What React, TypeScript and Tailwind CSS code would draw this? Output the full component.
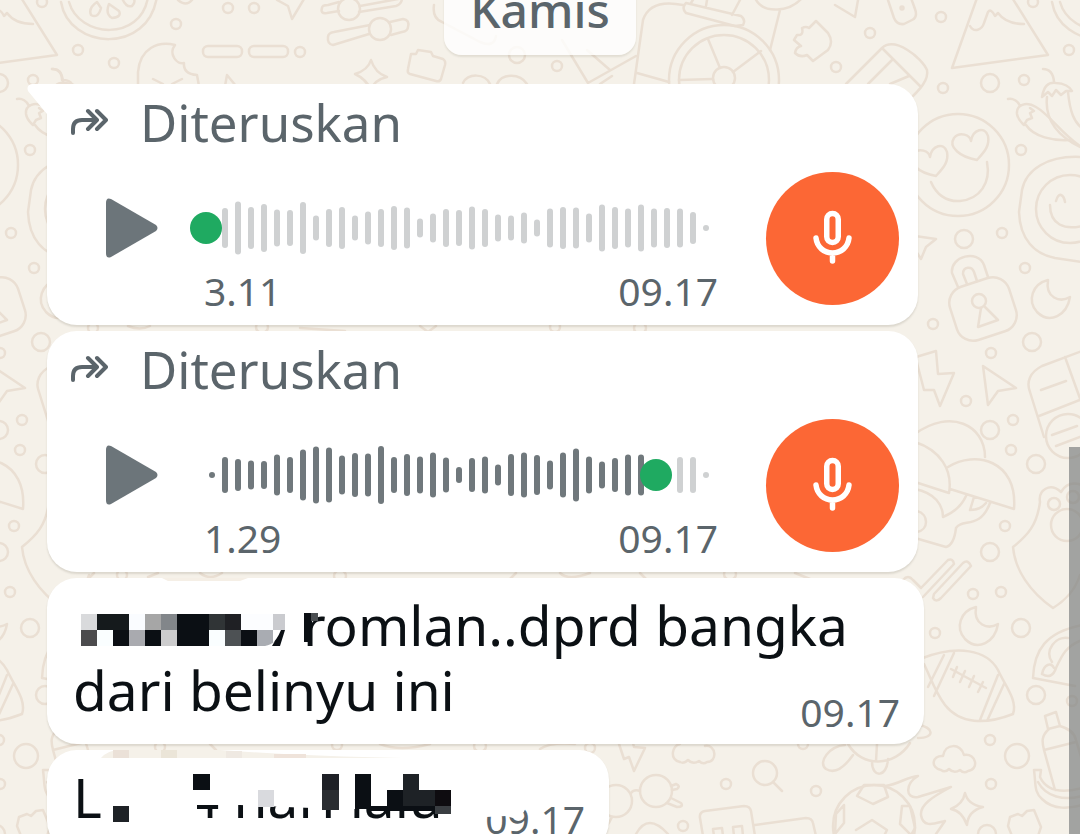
import { useState } from "react";

interface VoiceNote {
  id: string;
  length: string;
  time: string;
  played: number;
  tail?: boolean;
  bars: number[];
}

const voiceNotes: VoiceNote[] = [
  {
    id: "voice-1",
    length: "3.11",
    time: "09.17",
    played: 0,
    tail: true,
    bars: [
      6, 40, 53, 42, 48, 37, 36, 52, 25, 38, 42, 25, 33, 38, 44, 41, 19, 29, 38, 36,
      43, 38, 27, 25, 31, 17, 39, 42, 41, 29, 47, 42, 39, 47, 39, 40, 39, 32, 6,
    ],
  },
  {
    id: "voice-2",
    length: "1.29",
    time: "09.17",
    played: 90,
    bars: [
      6, 36, 32, 29, 28, 41, 36, 51, 57, 55, 39, 44, 43, 58, 36, 42, 37, 45, 35, 16,
      34, 37, 21, 42, 45, 40, 29, 45, 53, 37, 27, 34, 41, 41, 28, 16, 36, 36, 6,
    ],
  },
];

// x, y, radius
const edgeDots = [
  [1069, 50, 5], [941, 17, 5], [943, 88, 5], [1024, 80, 5], [990, 83, 9], [1033, 2, 5],
  [1021, 150, 5], [964, 239, 9], [1002, 233, 5], [1025, 268, 5], [933, 324, 5], [1032, 342, 9],
  [991, 353, 5], [966, 401, 5], [990, 430, 9], [1013, 420, 5], [1011, 450, 5], [1036, 464, 9],
  [1054, 504, 6], [1073, 497, 6], [1005, 526, 5], [990, 552, 9], [973, 594, 5], [1001, 592, 5],
  [935, 633, 5], [1021, 628, 9], [1036, 695, 9], [1072, 701, 5], [990, 740, 5], [1017, 756, 12],
  [991, 784, 5], [987, 834, 9],
];

const innerDots = [
  [114, 63, 5], [228, 8, 5], [254, 8, 5], [176, 24, 5], [300, 52, 5], [517, 55, 8], [557, 66, 5],
  [870, 33, 5], [836, 67, 5], [726, 784, 5], [816, 791, 5], [683, 826, 5], [590, 748, 5], [803, 744, 5],
  [93, 328, 5], [262, 327, 6], [555, 327, 5], [640, 328, 6], [122, 575, 5], [340, 576, 6], [730, 574, 6],
  [160, 747, 5], [337, 745, 5], [480, 746, 6],
];

// 13 cells per row, 16px each
const maskRows = [
  ["#d9dadc", "#151a1c", "#151a1c", "#fafcff", "#a6a6a6", "#82868a", "#0b0f14", "#0b0f14", "#303436", "#1f2024", "#fcfdff", "#fcfdff", "#cacbcf"],
  ["#4b4b4d", "#fafeff", "#0b0f14", "#a9aaaf", "#0b0f14", "#cccccd", "#0b0f14", "#0b0f14", "#fafeff", "#4d5154", "#0b0f14", "#a9acb2", "#ffffff"],
];

function EdgeDoodles() {
  return (
    <>
      {edgeDots.map(([x, y, r]) => (
        <circle key={`${x}-${y}`} cx={x} cy={y} r={r} />
      ))}
      {/* mountain */}
      <path d="M977 -2L952 68L1048 55L1011 -4M970 26C974 33 982 30 984 23L988 12Q991 8 995 16L998 13Q1006 24 1024 24" />
      {/* melon slice */}
      <path d="M1052 2C1060 50 1140 55 1148 -4M1060 2C1070 38 1132 42 1139 -3" />
      {/* heart eyes */}
      <circle cx="958" cy="165" r="51" />
      <path d="M977 160C960 157 948 147 954 138C960 131 970 135 971 141C973 129 985 126 988 136C990 146 984 152 977 160Z" />
      <path d="M936 176C919 173 907 163 913 154C919 147 929 151 930 157C932 145 944 142 947 152C949 162 943 168 936 176Z" />
      <path d="M931 182C936 194 946 202 960 201C980 199 991 183 987 162" />
      {/* chillies */}
      <path d="M1008 99C1013 98 1018 101 1020 106M1036 107C1026 101 1016 105 1017 114C1018 120 1021 122 1024 125L1027 120L1032 118L1030 113L1034 111L1030 108M1026 125C1034 137 1053 141 1070 140M1036 107C1050 115 1060 132 1080 146" />
      <path d="M1042 97C1044 86 1048 82 1056 83C1064 83 1070 87 1072 91L1066 91L1061 95L1056 90L1052 96L1048 92ZM1047 97C1045 115 1052 133 1080 147M1068 92C1070 112 1074 122 1082 128M1043 69Q1053 69 1054 82" />
      {/* smiling slice */}
      <circle cx="1070" cy="209" r="34" />
      <path d="M1082 157C1047 155 1026 170 1022 190L1019 212C1020 240 1035 254 1055 258L1082 262M1050 205C1050 225 1065 230 1082 226M1056 201Q1058 194 1061 195T1065 202" />
      {/* padlock */}
      <rect x="952" y="281" width="62" height="56" rx="17" transform="rotate(-18 983 309)" />
      <circle cx="979" cy="301" r="7" />
      <path d="M958 287L952 273C950 256 978 249 984 265L988 277M967 284L963 274C963 266 972 266 974 272L977 281M981 308L978 327L998 320L985 307" />
      {/* moons */}
      <path d="M1048 280C1032 284 1027 301 1037 312C1050 325 1067 315 1070 297C1060 303 1045 298 1048 280Z" />
      <path d="M976 607C960 611 955 628 965 639C978 652 995 642 998 624C988 630 973 625 976 607Z" />
      {/* plane, bolt, pointer */}
      <path d="M908 235L936 239L926 247L921 259L912 245M916 357L936 351L938 374L954 373L940 406L934 390L924 390L917 363M983 366L1016 388L998 391L988 405Z" />
      {/* sleeping bag */}
      <circle cx="1068" cy="436" r="22" />
      <path d="M1082 351L1042 366C1030 372 1026 382 1030 392L1044 437M1065 357L1082 404M1039 416L1082 399M1041 390L1066 381M1052 435L1077 426M1056 446L1080 437" />
      {/* mushrooms */}
      <path d="M915 434C950 408 985 425 985 457M915 442C940 450 953 470 949 493L915 482M948 467C975 450 1018 460 1014 509L950 489M915 489C935 493 943 505 943 517C955 512 962 505 966 496M974 497L970 510C978 510 982 508 986 503M990 503C980 530 962 518 956 528Q954 545 946 547L915 538M917 511C929 514 929 530 917 532" />
      {/* paw */}
      <circle cx="1067" cy="525" r="16" />
      <path d="M1061 492C1050 482 1038 490 1040 502C1037 525 1028 535 1013 547C1015 570 1030 592 1053 608C1066 600 1076 588 1080 575M1061 492Q1068 480 1082 485" />
      {/* pencils */}
      <path d="M903 580Q908 574 913 580L921 588L948 560Q953 558 954 564L923 597M934 594L963 563Q968 559 971 566L941 598Q936 603 933 598Z" />
      {/* football */}
      <path d="M920 659C958 644 987 650 998 670C1004 684 1018 700 1013 714C985 725 960 724 945 705C935 692 930 676 924 664M944 655L928 687M954 653L934 696M998 675L980 720M1004 684L987 721M951 669L986 688M957 667L953 677M965 671L960 682M974 676L969 687M983 682L978 692" />
      {/* helmet */}
      <path d="M1033 678C1034 650 1046 632 1082 625M1033 678L1075 686M1042 674C1044 664 1051 662 1054 668M1042 674Q1052 680 1056 668C1062 655 1066 646 1082 640M1052 662C1044 650 1056 636 1068 638" />
      {/* bottle and bananas */}
      <path d="M1045 716L1056 712L1060 726L1048 729ZM1049 729C1041 736 1042 742 1044 750L1055 790M1060 726Q1074 730 1076 740L1082 760M1044 750L1076 742M1034 770H1041L1040 777C1046 790 1060 794 1082 788M1034 770C1036 785 1034 792 1042 799C1054 811 1070 808 1082 805M1038 782C1046 797 1064 801 1082 796" />
      {/* cloud, star, puzzle piece */}
      <path d="M941 770C930 768 932 755 943 756C945 743 961 743 964 755C977 753 979 770 968 771Q964 774 960 770Q954 774 949 769Q945 773 941 770Z" />
      <path d="M965 793Q968 805 983 807Q968 811 967 825Q962 811 951 809Q963 804 965 793Z" />
      <path d="M1010 817L1018 814L1022 816L1027 811L1034 810L1041 827L1038 836H1012L1008 826Z" />
    </>
  );
}

function Wallpaper() {
  return (
    <svg
      aria-hidden="true"
      viewBox="0 0 1080 834"
      preserveAspectRatio="xMidYMin slice"
      className="absolute inset-0 h-full w-full"
      fill="none"
      stroke="#eadfd3"
      strokeWidth="2.5"
      strokeLinejoin="round"
      strokeLinecap="round"
    >
      <EdgeDoodles />
      <g transform="translate(-991 0)">
        <EdgeDoodles />
      </g>
      {innerDots.map(([x, y, r]) => (
        <circle key={`${x}-${y}`} cx={x} cy={y} r={r} />
      ))}
      {/* melon seeds */}
      <path d="M97 2Q88 8 91 15Q98 19 101 8ZM109 4Q105 14 112 18Q122 17 119 11ZM122 -2Q126 8 132 6Q137 1 132 -3M178 0Q186 7 192 0" />
      {/* dashes and sliders */}
      <rect x="203" y="46" width="39" height="11" rx="5" />
      <rect x="249" y="46" width="39" height="11" rx="5" />
      <path d="M339 11L327 13Q320 14 322 8Q322 5 328 5L339 2M360 6L398 -1M359 12L396 6Q402 4 402 -2" />
      <circle cx="349" cy="9" r="11" />
      <path d="M369 34L333 45Q327 44 328 37Q328 33 334 32L370 25M390 22L403 19Q410 20 408 27Q408 31 402 32L391 35" />
      <circle cx="380" cy="29" r="11" />
      <path d="M277 0L288 6L292 19L304 -1M434 5Q432 18 442 22L480 42Q494 48 496 36" />
      {/* ice cream */}
      <path d="M138 86V72C140 48 158 41 175 45C168 54 177 65 184 63Q183 74 197 75L199 86M153 79L163 84M182 79L172 84M225 86L227 75L236 86" />
      <path d="M371 60Q375 73 387 77Q374 80 371 90Q366 79 355 74Q368 70 371 60Z" />
      <path d="M411 54L416 54L418 50L431 52L433 56L443 59Q446 61 445 65L441 79Q440 82 436 81L410 74Q407 73 408 69Z" />
      <path d="M463 83C468 73 485 73 490 84M497 84C502 73 520 73 527 84M52 69Q62 68 62 80Q70 80 72 84" />
      {/* stroller */}
      <circle cx="724" cy="80" r="55" />
      <circle cx="724" cy="80" r="45" />
      <circle cx="724" cy="78" r="11" />
      <path d="M708 39L720 68M761 51L733 72M679 80L713 79M634 84L643 20C648 5 663 1 683 5M562 40L588 83L636 56M587 50L610 70M600 84L612 76M637 73L669 82M770 50L780 10M756 0C764 14 790 12 802 -2M740 0L732 15M686 3L741 16Q746 20 743 25L735 26L686 13Q681 8 686 3M691 3L694 -2M706 6L707 0" />
      <path d="M816 21L828 33Q834 42 828 50L813 61L807 55Q800 58 795 53Q796 47 801 46L794 40L797 35Q804 36 802 28Q806 26 809 28ZM835 5L855 17L858 0" />
      {/* eraser and die */}
      <path d="M846 84L882 48C895 36 922 58 927 70C929 80 919 90 913 96M883 49L920 86M868 84L893 59M890 84L909 76" />
      <path d="M888 0L894 18Q897 25 904 24L912 20Q918 17 915 9L911 -2" />
      <circle cx="902" cy="8" r="1.5" />
      {/* fragments between bubbles */}
      <path d="M128 326Q140 331 150 326M300 328L345 331M420 326L428 332L436 326M88 579L94 573M148 577L158 573M200 573Q210 581 222 573M510 579L516 573M560 573Q568 581 590 573M640 573L646 579M795 573L810 579M210 744L216 750M380 744Q400 752 430 744M540 749Q550 742 575 744" />
      {/* bolt, clouds, magnifier, sunglasses */}
      <path d="M619 744L624 759L629 757L634 771L645 748L634 747L633 743" />
      <path d="M680 762C669 760 672 745 680 744M705 746C716 744 718 762 707 762Q703 765 699 761Q693 765 688 760Q684 764 680 762" />
      <circle cx="765" cy="773" r="12" />
      <circle cx="656" cy="791" r="16" />
      <circle cx="616" cy="801" r="16" />
      <path d="M773 782L782 791M631 793Q634 789 640 791M671 786L676 784Q681 786 677 789L672 790M671 798L681 803Q684 807 677 807L667 803M612 817Q608 826 600 834M636 834Q648 812 668 834" />
      {/* turtle */}
      <path d="M848 744C862 768 895 767 910 743M845 745C830 746 817 762 826 769C836 775 846 765 853 755M877 744L876 761M872 762C872 778 887 778 888 759M919 725C933 727 936 738 918 738" />
      {/* buildings */}
      <path d="M703 836L700 818Q699 812 705 811L744 806Q750 806 751 811L755 836M755 825L806 818Q812 818 813 823L816 836M714 836L713 829L722 828L723 836M734 836L733 827L742 826L743 836" />
      {/* flaming ball */}
      <circle cx="874" cy="826" r="41" />
      <path d="M857 796L864 785H884L888 797L873 804ZM856 830L872 820L887 830L884 836M902 806H910L915 828L911 835L900 824ZM844 805L836 814L835 834L844 823ZM885 786C900 784 906 777 918 776C906 783 904 799 918 797L951 787C932 797 920 805 921 815C923 829 936 823 945 821L936 834" />
    </svg>
  );
}

function ForwardIcon() {
  return (
    <svg
      aria-hidden="true"
      viewBox="0 0 38 28"
      className="h-7 w-[38px] shrink-0"
      fill="none"
      stroke="#5b656b"
      strokeWidth="4"
      strokeLinecap="round"
      strokeLinejoin="round"
    >
      <path d="M3 25V21Q3 12 12 12H26M18 3L27 12L18 21M27 3L36 12L27 21" />
    </svg>
  );
}

function VoiceBubble({ note }: { note: VoiceNote }) {
  const [played, setPlayed] = useState(note.played);
  const knob = 16 + played * 5;

  return (
    <article
      className={`relative w-full max-w-[871px] bg-white pt-[6px] pb-[10px] shadow-[0_2px_2px_rgba(90,80,60,0.16)] ${
        note.tail ? "rounded-[30px] rounded-tl-none" : "rounded-[30px]"
      }`}
    >
      {note.tail && (
        <svg aria-hidden="true" viewBox="0 0 21 34" className="absolute top-0 -left-5 h-[34px] w-[21px]" fill="#ffffff">
          <path d="M5 0H21V34L20 30L1 7Q-1 1 5 0Z" />
        </svg>
      )}
      <div className="flex items-center gap-8 pl-[23px] text-[51px] leading-[64px] text-[#5b656b]">
        <ForwardIcon />
        <span>Diteruskan</span>
      </div>
      <div className="mt-[18px] flex items-start pr-[19px] pl-[58px]">
        <button type="button" aria-label="Putar" className="mt-[26px] mr-8 shrink-0">
          <svg viewBox="0 0 53 60" className="h-[60px] w-[53px]" fill="#6c757a">
            <path d="M1 5Q1 -1 6 1L51 27Q54 30 51 33L6 59Q1 61 1 55Z" />
          </svg>
        </button>
        <div className="flex-1">
          <div className="relative mt-6">
            <svg aria-hidden="true" viewBox="0 0 528 64" className="h-16 w-full">
              {note.bars.map((height, i) => {
                const x = 22 + i * 13;
                return (
                  <rect
                    key={i}
                    x={x - 3}
                    y={32 - height / 2}
                    width="6"
                    height={height}
                    rx="3"
                    fill={x < knob ? "#70787c" : "#cfd1d2"}
                  />
                );
              })}
              <circle cx={knob} cy="32" r="16" fill="#1faa61" />
            </svg>
            <input
              type="range"
              min={0}
              max={100}
              value={played}
              onChange={(event) => setPlayed(Number(event.target.value))}
              aria-label="Posisi pesan suara"
              className="absolute inset-0 h-full w-full cursor-pointer opacity-0"
            />
          </div>
          <div className="mt-[7px] flex justify-between pl-[14px] text-[39px] leading-[48px] text-[#5b656b]">
            <span>{note.length}</span>
            <time>{note.time}</time>
          </div>
        </div>
        <svg aria-hidden="true" viewBox="0 0 133 133" className="ml-12 h-[133px] w-[133px] shrink-0 rounded-full bg-[#fc6735]">
          <g fill="none" stroke="#ffffff" strokeWidth="5.5" strokeLinecap="round">
            <rect x="60.75" y="41.5" width="11.5" height="29" rx="5.75" />
            <path d="M50 66C51 75 58 81 66.5 81S82 75 83 66M66.5 81V89" />
          </g>
        </svg>
      </div>
    </article>
  );
}

function MaskedName() {
  return (
    <svg aria-hidden="true" viewBox="0 0 230 32" className="inline-block h-8 w-[230px] align-baseline">
      {maskRows.map((row, y) =>
        row.map((color, x) => (
          <rect key={`${x}-${y}`} x={8 + x * 16} y={y * 16} width={x === 12 ? 12 : 16} height="16" fill={color} />
        ))
      )}
      <path d="M197 32Q204 26 208 16H212L207 32Z" fill="#0b0f14" />
      <path d="M192 32H199L202 27Q198 31 192 32Z" fill="#ffffff" />
    </svg>
  );
}

export default function App() {
  return (
    <div className="relative flex h-screen flex-col overflow-hidden bg-[#f5f1e9] font-['Noto_Sans','Open_Sans',sans-serif]">
      <Wallpaper />

      <div className="relative -mt-8 self-center rounded-[18px] bg-white/80 px-[26px] pt-[10px] pb-[13px] text-[48px] leading-[64px] font-medium text-[#5b656b] shadow-[0_2px_2px_rgba(90,80,60,0.12)]">
        Kamis
      </div>

      <main className="relative mt-[29px] mr-[156px] ml-[47px] flex flex-col gap-[6px]">
        {voiceNotes.map((note) => (
          <VoiceBubble key={note.id} note={note} />
        ))}

        <article className="relative flex w-full max-w-[877px] flex-col rounded-[30px] bg-white pt-[14px] pr-6 pb-2 pl-[26px] shadow-[0_2px_2px_rgba(90,80,60,0.16)]">
          <p className="text-[55px] leading-[65px] text-[#0b1014]">
            <MaskedName />
            romlan..dprd bangka
            <br />
            dari belinyu ini
          </p>
          <time className="-mt-[34px] self-end text-[39px] leading-[48px] text-[#5b656b]">09.17</time>
          <svg aria-hidden="true" viewBox="47 578 300 70" className="pointer-events-none absolute top-0 left-0 h-[70px] w-[300px]">
            <path d="M162 578H248L240 581H168Z" fill="#f5efe6" />
            <path d="M304 613H311V621L309 642H304Z" fill="#0b0f14" />
            <rect x="311" y="613" width="7" height="8" fill="#4b4f52" />
          </svg>
        </article>

        <article className="relative flex w-full max-w-[562px] shrink-0 flex-col rounded-[30px] bg-white pt-[14px] pr-6 pb-2 pl-[26px] shadow-[0_2px_2px_rgba(90,80,60,0.16)]">
          <p className="flex gap-[86px] text-[55px] leading-[65px] text-[#0b1014]">
            <span>L</span>
            <span>4 hari lalu</span>
          </p>
          <time className="-mt-[34px] self-end text-[39px] leading-[48px] text-[#5b656b]">09.17</time>
          {/* censor strokes over the text */}
          <svg aria-hidden="true" viewBox="47 749 562 100" className="pointer-events-none absolute top-0 left-0 h-[100px] w-[562px]">
            <path d="M101 757Q108 749 120 749H220Q300 755 403 757Z" fill="#f5f1e9" />
            <path d="M113 749H129V757H113Z" fill="#ebe1d8" />
            <path d="M161 749H177V757H161Z" fill="#ebe5d8" />
            <path d="M226 750H242V757H226Z" fill="#efe9e2" />
            <path d="M274 753H306V757H274Z" fill="#efe3da" />
            <path d="M150 764H480L528 800Q526 812 516 818L506 815L486 816L456 804L420 808L340 808L285 806L240 804H197V816H150Z" fill="#ffffff" />
            <path d="M193 773H210V789H193Z" fill="#0b0f14" />
            <path d="M113 805H129V821H113Z" fill="#1e2226" />
            <path d="M258 789H274V806H258Z" fill="#d9dade" />
            <path d="M322 773H339V789H322Z" fill="#1e2026" />
            <path d="M322 789H339V809H322Z" fill="#2a2d31" />
            <path d="M355 773H371V808H355ZM387 789H403V805H387ZM371 805H435V810H371Z" fill="#0b0f14" />
            <path d="M403 773H419V789H435V805H403Z" fill="#1e2226" />
            <path d="M435 789H451V805H435Z" fill="#0e0c10" />
            <path d="M435 805H451V813H435Z" fill="#3a3e42" />
          </svg>
        </article>
      </main>

      <div className="absolute top-[447px] right-0 bottom-0 w-[11px] bg-[#7f8282]/70" />
    </div>
  );
}
